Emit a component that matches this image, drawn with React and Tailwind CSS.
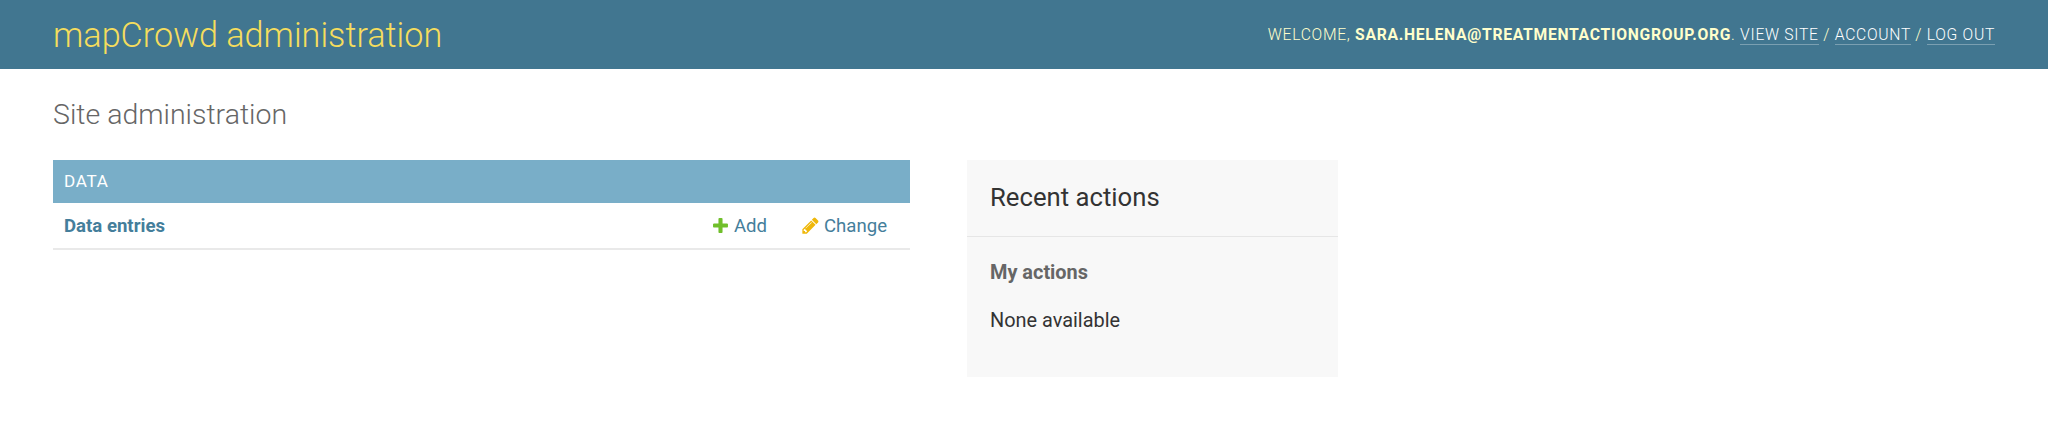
const Plus = () => (
  <svg className="shrink-0" width="19" height="19" viewBox="0 0 1792 1792" fill="#70bf2b"><path d="M1600 796v192q0 40-28 68t-68 28h-416v416q0 40-28 68t-68 28h-192q-40 0-68-28t-28-68v-416h-416q-40 0-68-28t-28-68v-192q0-40 28-68t68-28h416v-416q0-40 28-68t68-28h192q40 0 68 28t28 68v416h416q40 0 68 28t28 68z"/></svg>
);
const Pencil = () => (
  <svg className="shrink-0" width="19" height="19" viewBox="0 0 1792 1792" fill="#efb80b"><path d="M491 1536l91-91-235-235-91 91v107h128v128h107zm523-928q0-22-22-22-10 0-17 7l-542 542q-7 7-7 17 0 22 22 22 10 0 17-7l542-542q7-7 7-17zm-54-192l416 416-832 832h-416v-416zm683 96q0 53-37 90l-166 166-416-416 166-165q36-38 90-38 53 0 91 38l235 234q37 39 37 91z"/></svg>
);
export default function App() {
  return (
    <div className="h-[426px] w-[2048px] overflow-hidden bg-white font-[Roboto,sans-serif] text-[#333] antialiased">
      <header className="flex h-[69px] items-center justify-between bg-[#417690] px-[53px] text-[#ffc]">
        <h1 className="pt-px text-[34.2px] leading-none font-light text-[#f5dd5d]">mapCrowd administration</h1>
        <div className="text-[15.7px] leading-none font-light tracking-[0.71px] uppercase">
          Welcome, <strong className="font-bold">sara.helena@treatmentactiongroup.org</strong>.{" "}
          <a className="border-b border-white/30 text-white">View site</a> / <a className="border-b border-white/30 text-white">Account</a> / <a className="border-b border-white/30 text-white">Log out</a>
        </div>
      </header>
      <main className="px-[53px] pt-[31px]">
        <h2 className="h-[60px] text-[28.5px] leading-[30px] font-light text-[#666]">Site administration</h2>
        <div className="flex items-start">
          <section className="w-[857px]">
            <h3 className="flex h-[43px] items-center bg-[#79aec8] px-[11px] text-[17.1px] tracking-[0.71px] text-white">DATA</h3>
            <div className="flex h-[47px] items-center border-b-2 border-[#e9e9e9] pr-[23px] pl-[11px] text-[18.6px] text-[#447e9b]">
              <strong className="flex-1 pt-[2px] font-bold">Data entries</strong>
              <a className="flex w-[90px] items-center gap-[4px]"><Plus /><span className="pt-[2px]">Add</span></a>
              <a className="flex items-center gap-[4px]"><Pencil /><span className="pt-[2px]">Change</span></a>
            </div>
          </section>
          <aside className="ml-[57px] h-[217px] w-[371px] bg-[#f8f8f8]">
            <h3 className="flex h-[77px] items-center border-b border-[#e6e6e6] px-[23px] pb-[2px] text-[25.7px]">Recent actions</h3>
            <h4 className="mt-[24px] px-[23px] text-[19.9px] leading-6 font-bold text-[#666]">My actions</h4>
            <p className="mt-[24px] px-[23px] text-[19.9px] leading-6">None available</p>
          </aside>
        </div>
      </main>
    </div>
  );
}
